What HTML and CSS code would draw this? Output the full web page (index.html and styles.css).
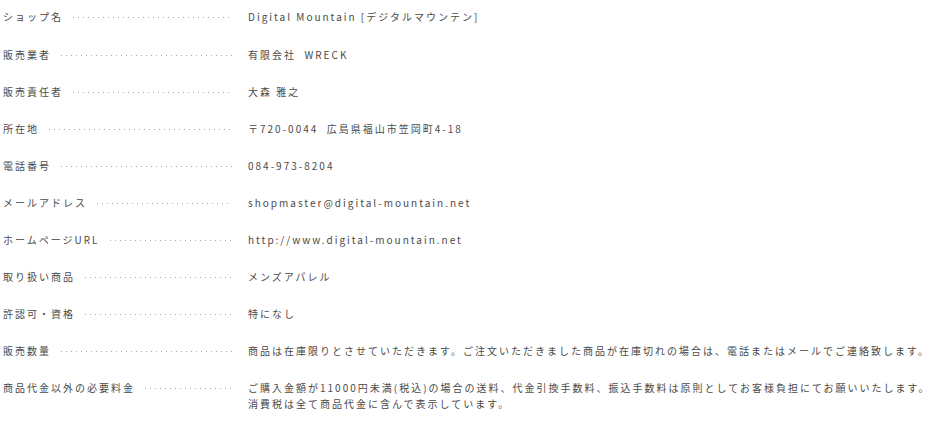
FILE: index.html
```
<!DOCTYPE html>
<html lang="ja">
<head>
    <meta charset="UTF-8">
    <meta name="viewport" content="width=device-width, initial-scale=1.0">
    <title>特定商取引法に基づく表記</title>
    <link rel="stylesheet" href="styles.css">
</head>
<body>
    <dl class="law">
        <div class="row">
            <dt><span class="name">ショップ名</span><span class="dots"></span></dt>
            <dd>Digital Mountain [デジタルマウンテン]</dd>
        </div>
        <div class="row">
            <dt><span class="name">販売業者</span><span class="dots"></span></dt>
            <dd>有限会社 &nbsp;WRECK</dd>
        </div>
        <div class="row">
            <dt><span class="name">販売責任者</span><span class="dots"></span></dt>
            <dd>大森 雅之</dd>
        </div>
        <div class="row">
            <dt><span class="name">所在地</span><span class="dots"></span></dt>
            <dd>〒720-0044 &nbsp;広島県福山市笠岡町4-18</dd>
        </div>
        <div class="row">
            <dt><span class="name">電話番号</span><span class="dots"></span></dt>
            <dd>084-973-8204</dd>
        </div>
        <div class="row">
            <dt><span class="name">メールアドレス</span><span class="dots"></span></dt>
            <dd>shopmaster@digital-mountain.net</dd>
        </div>
        <div class="row">
            <dt><span class="name">ホームページURL</span><span class="dots"></span></dt>
            <dd>http://www.digital-mountain.net</dd>
        </div>
        <div class="row">
            <dt><span class="name">取り扱い商品</span><span class="dots"></span></dt>
            <dd>メンズアパレル</dd>
        </div>
        <div class="row">
            <dt><span class="name">許認可・資格</span><span class="dots"></span></dt>
            <dd>特になし</dd>
        </div>
        <div class="row">
            <dt><span class="name">販売数量</span><span class="dots"></span></dt>
            <dd>商品は在庫限りとさせていただきます。ご注文いただきました商品が在庫切れの場合は、電話またはメールでご連絡致します。</dd>
        </div>
        <div class="row">
            <dt><span class="name">商品代金以外の必要料金</span><span class="dots"></span></dt>
            <dd>ご購入金額が11000円未満(税込)の場合の送料、代金引換手数料、振込手数料は原則としてお客様負担にてお願いいたします。<br>消費税は全て商品代金に含んで表示しています。</dd>
        </div>
    </dl>
</body>
</html>
```

FILE: styles.css
```
body {
    margin: 0;
    background: #fff;
    color: #4a4a4a;
    font-family: "Noto Sans CJK JP", "Noto Sans", sans-serif;
    font-size: 10px;
    letter-spacing: 2px;
}

.law {
    margin: 0;
    padding: 9px 0 0 3px;
}

.row {
    display: grid;
    grid-template-columns: 229px 1fr;
    column-gap: 16px;
    margin-bottom: 21px;
    line-height: 16px;
}

.row:first-child {
    margin-bottom: 22px;
}

.row dt {
    display: flex;
    align-items: center;
    height: 16px;
}

.row dd {
    margin: 0;
}

.dots {
    flex: 1;
    height: 1px;
    margin-left: 10px;
    margin-top: 1px;
    background-image: linear-gradient(to right, #aaa 1px, transparent 1px);
    background-size: 5px 1px;
    background-repeat: repeat-x;
}
```
